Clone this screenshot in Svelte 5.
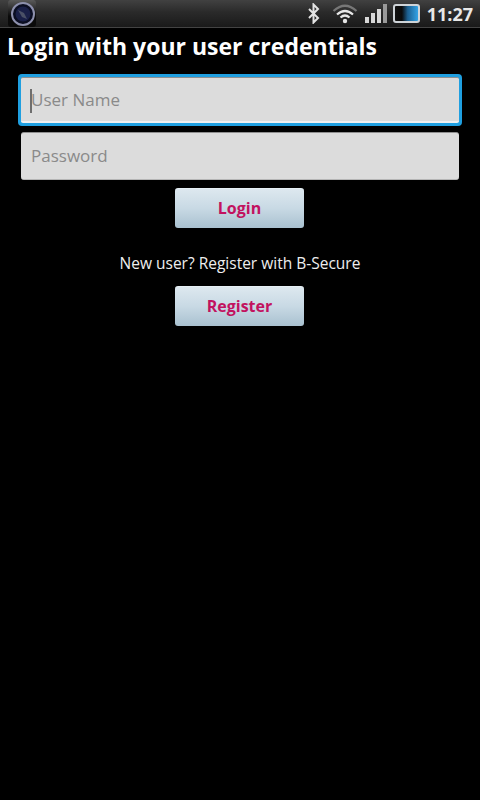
<script lang="ts">
	let username = $state('');
	let password = $state('');
</script>

<div class="screen">
	<header class="status-bar">
		<div class="app-icon">
			<svg width="28" height="28" viewBox="0 0 28 28">
				<circle cx="15" cy="14" r="11" fill="#0b0e22" stroke="#8d90ad" stroke-width="2" />
				<circle cx="15" cy="14" r="7.5" fill="#1a2048" />
				<path d="M10 10 L16 13 L19 19 L14 17 Z" fill="#4a5066" />
			</svg>
		</div>
		<div class="status-right">
			<svg class="bt" width="14" height="21" viewBox="0 0 14 21">
				<path d="M2 6 L11 15 L6.5 19.5 V1.5 L11 6 L2 15" fill="none" stroke="#e4e4e4" stroke-width="2" />
			</svg>
			<svg class="wifi" width="26" height="21" viewBox="0 0 26 21">
				<path d="M1.5 8 Q13 -2.5 24.5 8" fill="none" stroke="#777" stroke-width="2.2" />
				<path d="M5 11.5 Q13 4.5 21 11.5" fill="none" stroke="#e8e8e8" stroke-width="2.2" />
				<path d="M8.5 14.5 Q13 10.5 17.5 14.5" fill="none" stroke="#e8e8e8" stroke-width="2.2" />
				<circle cx="13" cy="18" r="2.2" fill="#e8e8e8" />
			</svg>
			<div class="signal">
				<span class="bar b1"></span>
				<span class="bar b2"></span>
				<span class="bar b3"></span>
				<span class="bar b4"></span>
			</div>
			<div class="battery"></div>
			<span class="clock">11:27</span>
		</div>
	</header>

	<h1>Login with your user credentials</h1>

	<form class="form" onsubmit={(e) => e.preventDefault()}>
		<div class="focus-ring">
			<div class="field-wrap">
				<span class="caret"></span>
				<input class="field" type="text" placeholder="User Name" bind:value={username} />
			</div>
		</div>
		<input class="field second" type="password" placeholder="Password" bind:value={password} />
		<button class="btn login" type="submit">Login</button>
		<p class="note">New user? Register with B-Secure</p>
		<button class="btn" type="button">Register</button>
	</form>
</div>

<style>
	:global(body) {
		margin: 0;
		background: #000;
	}

	.screen {
		width: 480px;
		height: 800px;
		background: #000;
		font-family: "Open Sans", "Noto Sans", sans-serif;
		overflow: hidden;
	}

	.status-bar {
		height: 28px;
		box-sizing: border-box;
		display: flex;
		justify-content: space-between;
		align-items: center;
		padding: 0 7px 0 8px;
		background: linear-gradient(#414141, #2a2a2a 45%, #1a1a1a);
		border-bottom: 1px solid #444;
	}

	.app-icon {
		width: 28px;
		height: 27px;
		display: flex;
		align-items: center;
		justify-content: center;
		background: linear-gradient(#5a5a5a, #0a0a0a 60%);
		border-radius: 3px;
	}

	.status-right {
		display: flex;
		align-items: center;
		color: #e8e8e8;
	}

	.bt {
		margin-right: 11px;
	}

	.wifi {
		margin-right: 7px;
	}

	.signal {
		display: flex;
		align-items: flex-end;
		gap: 2px;
		height: 19px;
		margin-right: 6px;
	}

	.bar {
		width: 4px;
		background: #d8d8d8;
	}

	.b1 { height: 6px; }
	.b2 { height: 10px; }
	.b3 { height: 14px; }
	.b4 { height: 19px; background: #9a9a9a; }

	.battery {
		width: 27px;
		height: 19px;
		box-sizing: border-box;
		border: 2px solid #cfd4d8;
		border-radius: 3px;
		background: linear-gradient(90deg, #111 0, #0a0a0a 30%, #1c5f90 55%, #33a3e6 100%);
		margin-right: 7px;
	}

	.clock {
		font-size: 18px;
		font-weight: 700;
		line-height: 20px;
	}

	h1 {
		margin: 0;
		padding: 3px 0 0 7px;
		height: 38px;
		font-size: 23px;
		line-height: 30px;
		font-weight: 700;
		color: #fff;
		white-space: nowrap;
	}

	.form {
		display: flex;
		flex-direction: column;
		align-items: center;
		margin-top: 6px;
	}

	.focus-ring {
		padding: 3px;
		margin: -1px 0;
		background: #1f9fe0;
		border-radius: 4px;
		display: flex;
		line-height: 0;
	}

	.field-wrap {
		position: relative;
		display: flex;
	}

	.caret {
		position: absolute;
		left: 9px;
		top: 12px;
		width: 2px;
		height: 24px;
		background: #6e6e6e;
	}

	.field {
		width: 438px;
		height: 46px;
		box-sizing: border-box;
		margin: 0;
		padding: 0 10px;
		border: none;
		border-top: 1px solid #8f8f8f;
		border-bottom: 2px solid #f0f0f0;
		border-radius: 2px;
		background: #dcdcdc;
		font-family: inherit;
		font-size: 17px;
		color: #333;
		outline: none;
	}

	.field::placeholder {
		color: #8a8a8a;
		opacity: 1;
	}

	.second {
		height: 48px;
		margin-top: 7px;
		padding-bottom: 2px;
		border-radius: 3px;
		border-bottom: 1px solid #b5b5b5;
	}

	.btn {
		width: 129px;
		height: 40px;
		margin: 0 1px 0 0;
		padding: 0 0 2px;
		border: none;
		border-top: 1px solid #e6eff5;
		border-radius: 3px;
		background: linear-gradient(#dde8ef, #c8d9e4 50%, #a9c1d0);
		font-family: inherit;
		font-size: 16px;
		font-weight: 700;
		color: #c2125f;
	}

	.login {
		margin-top: 8px;
	}

	.note {
		margin: 24px 0 12px;
		font-size: 15.5px;
		line-height: 22px;
		color: #eee;
	}
</style>
